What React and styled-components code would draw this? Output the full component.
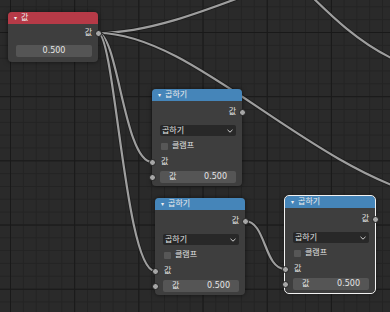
import styled, { createGlobalStyle } from "styled-components";

const GlobalStyle = createGlobalStyle`
  html, body {
    margin: 0;
    padding: 0;
    background: #2a2a2a;
  }
  body {
    font-family: "DejaVu Sans", "Noto Sans CJK KR", sans-serif;
  }
`;

// wires between sockets, drawn under the nodes
const links = [
  "M98,33 C160,33 230,0 300,-25",
  "M98,33 C190,33 300,160 420,195",
  "M98,33 C118,33 124,162 152,162",
  "M98,33 C115,33 125,271 155,271",
  "M300,-15 C330,15 360,45 400,62",
  "M245,221 C266,221 264,269 285,269",
];

const App = () => {
  return (
    <>
      <GlobalStyle />
      <Canvas>
        <Wires width="390" height="312" viewBox="0 0 390 312">
          {links.map((d, i) => (
            <g key={i}>
              <path d={d} stroke="#1c1c1c" strokeWidth="3.8" fill="none" />
              <path d={d} stroke="#9e9e9e" strokeWidth="2.2" fill="none" />
            </g>
          ))}
        </Wires>

        <Node $x={8} $y={12}>
          <Header $color="#b63a47">
            <Arrow>▾</Arrow>값
          </Header>
          <ValueBody>
            <OutputRow>
              값<Socket $side="right" />
            </OutputRow>
            <Field $center>0.500</Field>
          </ValueBody>
        </Node>

        <MathNode x={152} y={89} />
        <MathNode x={155} y={198} />
        <MathNode x={285} y={196} selected />
      </Canvas>
    </>
  );
};

const MathNode = ({ x, y, selected }) => (
  <Node $x={x} $y={y} $selected={selected}>
    <Header $color="#4585b9">
      <Arrow>▾</Arrow>곱하기
    </Header>
    <Body>
      <OutputRow>
        값<Socket $side="right" />
      </OutputRow>
      <Dropdown>
        <span>곱하기</span>
        <svg width="6" height="4" viewBox="0 0 6 4">
          <polyline points="0.5,0.8 3,3.2 5.5,0.8" stroke="#cfcfcf" strokeWidth="1" fill="none" />
        </svg>
      </Dropdown>
      <CheckRow>
        <CheckBox />
        클램프
      </CheckRow>
      <InputRow>
        <Socket $side="left" />값
      </InputRow>
      <FieldRow>
        <Socket $side="left" />
        <Field>
          <span>값</span>
          <span>0.500</span>
        </Field>
      </FieldRow>
    </Body>
  </Node>
);

export default App;

const Canvas = styled.div`
  position: relative;
  width: 390px;
  height: 312px;
  overflow: hidden;
  background-color: #2a2a2a;
  background-image:
    linear-gradient(to right, #191919 1px, transparent 1px),
    linear-gradient(to bottom, #191919 1px, transparent 1px),
    linear-gradient(to right, #232323 1px, transparent 1px),
    linear-gradient(to bottom, #232323 1px, transparent 1px);
  background-size: 64.2px 64.2px, 64.2px 64.2px, 12.84px 12.84px, 12.84px 12.84px;
  background-position: 10px 32px, 10px 32px, 10px 32px, 10px 32px;
`;

const Wires = styled.svg`
  position: absolute;
  left: 0;
  top: 0;
`;

const Node = styled.div`
  position: absolute;
  left: ${(p) => p.$x}px;
  top: ${(p) => p.$y}px;
  width: 90px;
  background: #3e3e3e;
  border-radius: 4px;
  box-shadow: 0 0 5px rgba(0, 0, 0, 0.55);
  outline: ${(p) => (p.$selected ? "1px solid #f2f2f2" : "none")};
  color: #e2e2e2;
  font-size: 8px;
  line-height: 12px;
`;

const Header = styled.div`
  height: 12px;
  display: flex;
  align-items: center;
  padding-left: 6px;
  background: ${(p) => p.$color};
  border-radius: 4px 4px 0 0;
  color: #ececec;
`;

const Arrow = styled.span`
  font-size: 6px;
  margin-right: 4px;
  color: #f0f0f0;
`;

const Body = styled.div`
  display: flex;
  flex-direction: column;
  padding: 5px 0 3px;
`;

const ValueBody = styled(Body)`
  padding: 3px 0 5px;
  gap: 6px;
`;

const OutputRow = styled.div`
  position: relative;
  height: 12px;
  display: flex;
  align-items: center;
  justify-content: flex-end;
  padding-right: 6px;
`;

const InputRow = styled.div`
  position: relative;
  height: 12px;
  margin-top: 4px;
  display: flex;
  align-items: center;
  padding-left: 9px;
`;

const Socket = styled.span`
  position: absolute;
  top: 3px;
  ${(p) => (p.$side === "left" ? "left: -3.5px;" : "right: -3.5px;")}
  width: 5px;
  height: 5px;
  border-radius: 50%;
  background: #a6a6a6;
  border: 1px solid #1f1f1f;
`;

const Dropdown = styled.div`
  height: 11px;
  margin: 7px 6px 0 8px;
  padding: 0 3px 0 2px;
  display: flex;
  align-items: center;
  justify-content: space-between;
  background: #282828;
  border-radius: 2px;
  line-height: 11px;
`;

const CheckRow = styled.div`
  height: 12px;
  margin-top: 4px;
  padding-left: 9px;
  display: flex;
  align-items: center;
  gap: 4px;
`;

const CheckBox = styled.span`
  width: 7px;
  height: 7px;
  border-radius: 1px;
  background: #575757;
`;

const FieldRow = styled.div`
  position: relative;
  margin-top: 3px;
`;

const Field = styled.div`
  height: 12px;
  margin: 0 6px 0 8px;
  padding: 0 9px;
  display: flex;
  align-items: center;
  justify-content: ${(p) => (p.$center ? "center" : "space-between")};
  background: #555555;
  border-radius: 2px;
  color: #e6e6e6;
`;
